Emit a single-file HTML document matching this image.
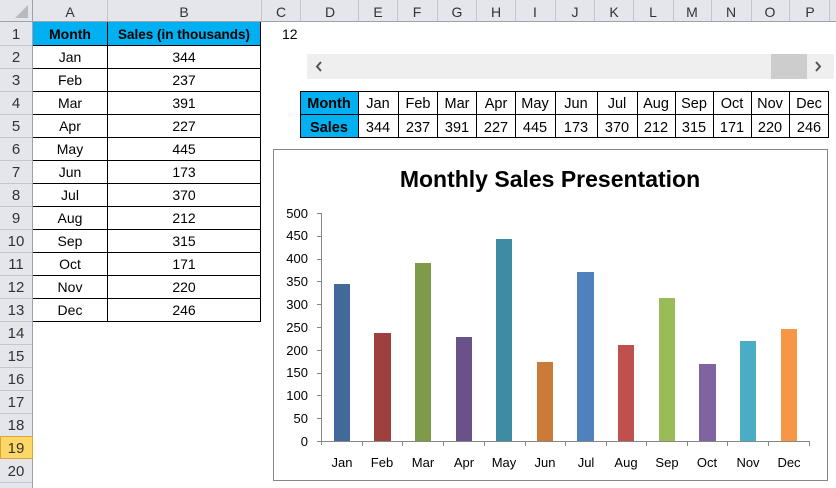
<!DOCTYPE html>
<html><head><meta charset="utf-8"><style>
html,body{margin:0;padding:0;background:#fff;width:836px;height:488px;overflow:hidden}
svg{display:block}
text{font-family:"Liberation Sans",sans-serif}
</style></head><body>
<svg width="836" height="488" xmlns="http://www.w3.org/2000/svg">
<!-- headers -->
<rect x="0" y="0" width="836" height="22" fill="#e4e6eb"/>
<rect x="0" y="0" width="33" height="488" fill="#e4e6eb"/>
<line x1="0" y1="21.5" x2="836" y2="21.5" stroke="#9ea3ab"/>
<line x1="32.5" y1="0" x2="32.5" y2="488" stroke="#9ea3ab"/>
<polygon points="28,5 28,18 15,18" fill="#b7bbc1"/>
<g stroke="#c3c7cd">
<line x1="107.5" y1="0" x2="107.5" y2="21"/><line x1="261.5" y1="0" x2="261.5" y2="21"/><line x1="300.5" y1="0" x2="300.5" y2="21"/><line x1="358.5" y1="0" x2="358.5" y2="21"/>
<line x1="397.5" y1="0" x2="397.5" y2="21"/><line x1="437.5" y1="0" x2="437.5" y2="21"/><line x1="476.5" y1="0" x2="476.5" y2="21"/><line x1="515.5" y1="0" x2="515.5" y2="21"/><line x1="555.5" y1="0" x2="555.5" y2="21"/><line x1="594.5" y1="0" x2="594.5" y2="21"/><line x1="633.5" y1="0" x2="633.5" y2="21"/><line x1="673.5" y1="0" x2="673.5" y2="21"/><line x1="711.5" y1="0" x2="711.5" y2="21"/><line x1="751.5" y1="0" x2="751.5" y2="21"/><line x1="789.5" y1="0" x2="789.5" y2="21"/><line x1="829.5" y1="0" x2="829.5" y2="21"/>
</g>
<g font-size="14" fill="#333" text-anchor="middle">
<text x="70" y="17">A</text><text x="184" y="17">B</text><text x="281" y="17">C</text><text x="330" y="17">D</text>
<text x="378" y="17">E</text><text x="417" y="17">F</text><text x="457" y="17">G</text><text x="496" y="17">H</text><text x="535" y="17">I</text><text x="575" y="17">J</text><text x="614" y="17">K</text><text x="653" y="17">L</text><text x="692" y="17">M</text><text x="731" y="17">N</text><text x="770" y="17">O</text><text x="810" y="17">P</text>
</g>
<!-- row headers -->
<rect x="0" y="436" width="33" height="23" fill="#fcd867"/>
<rect x="0.5" y="436.5" width="32" height="22" fill="none" stroke="#d9a53c"/>
<g stroke="#c3c7cd">
<line x1="0" y1="45.5" x2="32" y2="45.5"/><line x1="0" y1="68.5" x2="32" y2="68.5"/><line x1="0" y1="91.5" x2="32" y2="91.5"/><line x1="0" y1="114.5" x2="32" y2="114.5"/><line x1="0" y1="137.5" x2="32" y2="137.5"/><line x1="0" y1="160.5" x2="32" y2="160.5"/><line x1="0" y1="183.5" x2="32" y2="183.5"/><line x1="0" y1="206.5" x2="32" y2="206.5"/><line x1="0" y1="229.5" x2="32" y2="229.5"/><line x1="0" y1="252.5" x2="32" y2="252.5"/><line x1="0" y1="275.5" x2="32" y2="275.5"/><line x1="0" y1="298.5" x2="32" y2="298.5"/><line x1="0" y1="321.5" x2="32" y2="321.5"/><line x1="0" y1="344.5" x2="32" y2="344.5"/><line x1="0" y1="367.5" x2="32" y2="367.5"/><line x1="0" y1="390.5" x2="32" y2="390.5"/><line x1="0" y1="413.5" x2="32" y2="413.5"/><line x1="0" y1="482.5" x2="32" y2="482.5"/>
</g>
<g font-size="15" fill="#333" text-anchor="middle">
<text x="16" y="39">1</text><text x="16" y="62">2</text><text x="16" y="85">3</text><text x="16" y="108">4</text><text x="16" y="131">5</text><text x="16" y="154">6</text><text x="16" y="177">7</text><text x="16" y="200">8</text><text x="16" y="223">9</text><text x="16" y="246">10</text><text x="16" y="269">11</text><text x="16" y="292">12</text><text x="16" y="315">13</text><text x="16" y="338">14</text><text x="16" y="361">15</text><text x="16" y="384">16</text><text x="16" y="407">17</text><text x="16" y="430">18</text><text x="16" y="453">19</text><text x="16" y="476">20</text>
</g>
<!-- data table A/B -->
<rect x="33" y="22" width="228" height="23" fill="#00b0f0"/>
<g stroke="#000">
<line x1="33" y1="45.5" x2="261" y2="45.5"/><line x1="33" y1="68.5" x2="261" y2="68.5"/><line x1="33" y1="91.5" x2="261" y2="91.5"/><line x1="33" y1="114.5" x2="261" y2="114.5"/><line x1="33" y1="137.5" x2="261" y2="137.5"/><line x1="33" y1="160.5" x2="261" y2="160.5"/><line x1="33" y1="183.5" x2="261" y2="183.5"/><line x1="33" y1="206.5" x2="261" y2="206.5"/><line x1="33" y1="229.5" x2="261" y2="229.5"/><line x1="33" y1="252.5" x2="261" y2="252.5"/><line x1="33" y1="275.5" x2="261" y2="275.5"/><line x1="33" y1="298.5" x2="261" y2="298.5"/><line x1="33" y1="321.5" x2="261" y2="321.5"/>
<line x1="107.5" y1="22" x2="107.5" y2="321"/><line x1="260.5" y1="22" x2="260.5" y2="321"/>
</g>
<g font-size="14" fill="#000" text-anchor="middle">
<text x="70" y="39" font-weight="bold">Month</text><text x="184" y="39" font-weight="bold" font-size="13.5">Sales (in thousands)</text>
<text x="70" y="62">Jan</text><text x="184" y="62">344</text>
<text x="70" y="85">Feb</text><text x="184" y="85">237</text>
<text x="70" y="108">Mar</text><text x="184" y="108">391</text>
<text x="70" y="131">Apr</text><text x="184" y="131">227</text>
<text x="70" y="154">May</text><text x="184" y="154">445</text>
<text x="70" y="177">Jun</text><text x="184" y="177">173</text>
<text x="70" y="200">Jul</text><text x="184" y="200">370</text>
<text x="70" y="223">Aug</text><text x="184" y="223">212</text>
<text x="70" y="246">Sep</text><text x="184" y="246">315</text>
<text x="70" y="269">Oct</text><text x="184" y="269">171</text>
<text x="70" y="292">Nov</text><text x="184" y="292">220</text>
<text x="70" y="315">Dec</text><text x="184" y="315">246</text>
</g>
<text x="282" y="39" font-size="14" text-anchor="start">12</text>
<!-- scrollbar -->
<rect x="307" y="54" width="527" height="25" fill="#efefef"/>
<rect x="771" y="54" width="36" height="25" fill="#cdcdcd"/>
<path d="M321 62 L317 66.5 L321 71" fill="none" stroke="#555" stroke-width="2"/>
<path d="M816 62 L820 66.5 L816 71" fill="none" stroke="#555" stroke-width="2"/>
<!-- horizontal table -->
<rect x="300" y="91" width="58" height="47" fill="#00b0f0"/>
<rect x="300.5" y="91.5" width="528" height="46" fill="none" stroke="#000"/>
<line x1="300" y1="114.5" x2="829" y2="114.5" stroke="#000"/>
<g stroke="#000">
<line x1="358.5" y1="91" x2="358.5" y2="138"/><line x1="398.5" y1="91" x2="398.5" y2="138"/><line x1="437.5" y1="91" x2="437.5" y2="138"/><line x1="476.5" y1="91" x2="476.5" y2="138"/><line x1="515.5" y1="91" x2="515.5" y2="138"/><line x1="555.5" y1="91" x2="555.5" y2="138"/><line x1="597.5" y1="91" x2="597.5" y2="138"/><line x1="637.5" y1="91" x2="637.5" y2="138"/><line x1="675.5" y1="91" x2="675.5" y2="138"/><line x1="713.5" y1="91" x2="713.5" y2="138"/><line x1="751.5" y1="91" x2="751.5" y2="138"/><line x1="789.5" y1="91" x2="789.5" y2="138"/>
</g>
<g font-size="14.5" fill="#000" text-anchor="middle">
<text x="329" y="108" font-weight="bold">Month</text><text x="329" y="132" font-weight="bold">Sales</text>
<text x="378" y="108">Jan</text><text x="418" y="108">Feb</text><text x="457" y="108">Mar</text><text x="496" y="108">Apr</text><text x="535" y="108">May</text><text x="576" y="108">Jun</text><text x="617" y="108">Jul</text><text x="656" y="108">Aug</text><text x="694" y="108">Sep</text><text x="732" y="108">Oct</text><text x="770" y="108">Nov</text><text x="809" y="108">Dec</text>
<text x="378" y="132">344</text><text x="418" y="132">237</text><text x="457" y="132">391</text><text x="496" y="132">227</text><text x="535" y="132">445</text><text x="576" y="132">173</text><text x="617" y="132">370</text><text x="656" y="132">212</text><text x="694" y="132">315</text><text x="732" y="132">171</text><text x="770" y="132">220</text><text x="809" y="132">246</text>
</g>
<!-- chart -->
<rect x="273.5" y="149.5" width="554" height="331" fill="#fff" stroke="#868686"/>
<text x="550" y="187" font-size="23" font-weight="bold" text-anchor="middle">Monthly Sales Presentation</text>
<g font-size="13" fill="#000" text-anchor="end">
<text x="308" y="446">0</text><text x="308" y="423">50</text><text x="308" y="400">100</text><text x="308" y="377">150</text><text x="308" y="355">200</text><text x="308" y="332">250</text><text x="308" y="309">300</text><text x="308" y="286">350</text><text x="308" y="263">400</text><text x="308" y="240">450</text><text x="308" y="218">500</text>
</g>
<g stroke="#868686">
<line x1="321.5" y1="213" x2="321.5" y2="445"/>
<line x1="317" y1="213.5" x2="321" y2="213.5"/><line x1="317" y1="236.5" x2="321" y2="236.5"/><line x1="317" y1="259.5" x2="321" y2="259.5"/><line x1="317" y1="281.5" x2="321" y2="281.5"/><line x1="317" y1="304.5" x2="321" y2="304.5"/><line x1="317" y1="327.5" x2="321" y2="327.5"/><line x1="317" y1="350.5" x2="321" y2="350.5"/><line x1="317" y1="373.5" x2="321" y2="373.5"/><line x1="317" y1="395.5" x2="321" y2="395.5"/><line x1="317" y1="418.5" x2="321" y2="418.5"/>
<line x1="317" y1="441.5" x2="810" y2="441.5"/>
<line x1="362.5" y1="441" x2="362.5" y2="446"/><line x1="402.5" y1="441" x2="402.5" y2="446"/><line x1="443.5" y1="441" x2="443.5" y2="446"/><line x1="484.5" y1="441" x2="484.5" y2="446"/><line x1="525.5" y1="441" x2="525.5" y2="446"/><line x1="565.5" y1="441" x2="565.5" y2="446"/><line x1="606.5" y1="441" x2="606.5" y2="446"/><line x1="646.5" y1="441" x2="646.5" y2="446"/><line x1="687.5" y1="441" x2="687.5" y2="446"/><line x1="727.5" y1="441" x2="727.5" y2="446"/><line x1="768.5" y1="441" x2="768.5" y2="446"/><line x1="809.5" y1="441" x2="809.5" y2="446"/>
</g>
<g>
<rect x="334" y="284" width="16" height="157" fill="#41699a"/>
<rect x="374" y="333" width="17" height="108" fill="#9e403e"/>
<rect x="415" y="263" width="16" height="178" fill="#7f9a48"/>
<rect x="456" y="337" width="16" height="104" fill="#69518a"/>
<rect x="496" y="239" width="16" height="202" fill="#3d8ca3"/>
<rect x="537" y="362" width="16" height="79" fill="#cb7a38"/>
<rect x="577" y="272" width="17" height="169" fill="#4f81bd"/>
<rect x="618" y="345" width="16" height="96" fill="#c0504d"/>
<rect x="659" y="298" width="16" height="143" fill="#9bbb59"/>
<rect x="699" y="364" width="17" height="77" fill="#8064a2"/>
<rect x="740" y="341" width="16" height="100" fill="#4bacc6"/>
<rect x="781" y="329" width="16" height="112" fill="#f79646"/>
</g>
<g font-size="13" fill="#000" text-anchor="middle">
<text x="342" y="467">Jan</text><text x="382" y="467">Feb</text><text x="423" y="467">Mar</text><text x="464" y="467">Apr</text><text x="504" y="467">May</text><text x="545" y="467">Jun</text><text x="586" y="467">Jul</text><text x="626" y="467">Aug</text><text x="667" y="467">Sep</text><text x="707" y="467">Oct</text><text x="748" y="467">Nov</text><text x="789" y="467">Dec</text>
</g>
</svg>
</body></html>
